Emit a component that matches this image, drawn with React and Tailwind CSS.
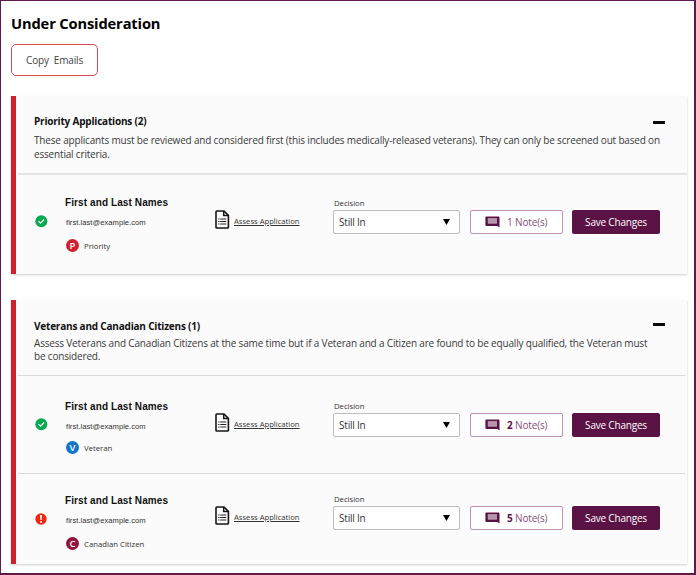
import React from "react";

function StatusIcon({ status }) {
  if (status === "ok") {
    return (
      <svg className="mt-[19px] block h-[13px] w-[13px]" viewBox="0 0 13 13">
        <circle cx="6.3" cy="6.2" r="6" fill="#0aa850" />
        <path d="M3.5 6.2 L5.5 8.2 L9.1 4.5" fill="none" stroke="#fff" strokeWidth="1.1" />
      </svg>
    );
  }
  return (
    <svg className="mt-[21px] block h-[12px] w-[12px]" viewBox="0 0 12 12">
      <circle cx="6" cy="6" r="5.7" fill="#f3260f" />
      <path d="M5 2.1 h2 l-0.4 4.9 h-1.2 z" fill="#fff" />
      <circle cx="6" cy="8.9" r="1" fill="#fff" />
    </svg>
  );
}

function DocumentIcon() {
  return (
    <svg className="block h-[19px] w-[15px] shrink-0" viewBox="0 0 15 19">
      <path d="M1.8 1 H9 L13.4 5.4 V17.2 Q13.4 18 12.6 18 H1.8 Q1 18 1 17.2 V1.8 Q1 1 1.8 1 Z" fill="#fff" stroke="#161616" strokeWidth="1.6" />
      <path d="M8.7 1.2 V5.5 H13" fill="none" stroke="#161616" strokeWidth="1.5" />
      <path d="M3.2 9 h1.3 M5.2 9 h6.1 M3.2 11.5 h1.3 M5.2 11.5 h6.1 M3.2 14 h1.3 M5.2 14 h6.1" stroke="#222" strokeWidth="1.2" />
    </svg>
  );
}

function CommentIcon() {
  return (
    <svg className="block h-[12px] w-[15px] shrink-0" viewBox="0 0 15 12">
      <path d="M1.4 0.4 H13.4 Q14.5 0.4 14.5 1.4 V11.6 L12.2 9.9 H1.4 Q0.4 9.9 0.4 8.9 V1.4 Q0.4 0.4 1.4 0.4 Z" fill="#5b1245" />
      <path d="M2.8 2.2 H12 V7.6 H2.8 Z" fill="#c4a8bc" />
      <path d="M2.8 4 H12 M2.8 5.8 H12" stroke="#96708a" strokeWidth="0.6" />
    </svg>
  );
}

function ApplicantRow({ applicant, className, infoClass, categoryClass }) {
  const { status, letter, badge, category, notes, boldCount } = applicant;
  return (
    <div className={`flex items-start pl-[19px] ${className}`}>
      <div className="w-[30px] shrink-0">
        <StatusIcon status={status} />
      </div>
      <div className={`w-[150px] shrink-0 font-['Liberation_Sans',Arial,sans-serif] ${infoClass}`}>
        <div className="text-[10px] leading-[12px] font-bold tracking-[0.1px] text-[#111]">First and Last Names</div>
        <div className="mt-[9px] pl-px text-[7.6px] leading-[10px] tracking-[0.03px] text-[#333]">first.last@example.com</div>
        <div className={`flex h-[13px] items-center gap-[5px] pl-px font-['Open_Sans',sans-serif] ${categoryClass}`}>
          <span className={`flex h-[13px] w-[13px] items-center justify-center rounded-full text-[9.5px] leading-none font-semibold text-white ${badge}`}>
            {letter}
          </span>
          <span className="text-[7.75px] leading-[12px] text-[#333]">{category}</span>
        </div>
      </div>
      <div className="mt-[14px] flex w-[118px] shrink-0 items-center gap-[4px]">
        <DocumentIcon />
        <a className="mt-[2px] text-[7.65px] leading-[12px] text-[#333] underline decoration-1 underline-offset-1">Assess Application</a>
      </div>
      <div className="mt-[2px] w-[127px] shrink-0">
        <div className="h-[12px] pl-[1px] text-[7.7px] leading-[11px] text-[#333]">Decision</div>
        <div className="flex h-[24px] items-center justify-between rounded-[2px] border border-[#bdbdbd] bg-white pr-[9px] pl-[5px] text-[10px] tracking-[-0.2px] text-[#333]">
          <span className="pt-px">Still In</span>
          <svg className="h-[6px] w-[7px]" viewBox="0 0 7 6">
            <path d="M0 0 H7 L3.5 6 Z" fill="#000" />
          </svg>
        </div>
      </div>
      <button className="mt-[14px] ml-[10px] flex h-[24px] w-[93px] shrink-0 items-center rounded-[2px] border border-[#bd93b1] bg-white pl-[14px] text-[10px] tracking-[-0.15px] whitespace-nowrap text-[#865078]">
        <CommentIcon />
        <span className="ml-[7px] pt-px">
          <span className={boldCount ? "font-bold text-[#5b1245]" : ""}>{notes}</span> Note(s)
        </span>
      </button>
      <button className="mt-[14px] ml-[9px] h-[24px] w-[88px] shrink-0 rounded-[2px] bg-[#5b1245] text-[10px] leading-[25px] font-medium tracking-[-0.2px] whitespace-nowrap text-white">
        Save Changes
      </button>
    </div>
  );
}

function Panel({ title, lines, className, headerClass, dashClass, textClass, dividerClass, children }) {
  return (
    <section className={`border-l-[5px] border-[#cf202f] bg-[#fbfbfb] shadow-[0_1px_2px_rgba(0,0,0,0.2)] ${className}`}>
      <header className={`pr-[22px] pl-[18px] ${headerClass}`}>
        <div className="flex h-[14px] items-start justify-between">
          <h2 className="text-[10px] leading-[14px] font-bold tracking-[-0.2px] text-[#111]">{title}</h2>
          <span className={`h-[3px] w-[12px] bg-[#0a0a0a] ${dashClass}`} />
        </div>
        <p className={`text-[10px] tracking-[-0.18px] whitespace-nowrap text-[#3a3a3a] ${textClass}`}>
          {lines[0]}
          <br />
          {lines[1]}
        </p>
      </header>
      <div className={`ml-[2px] ${dividerClass}`} />
      {children}
    </section>
  );
}

const priority = { status: "ok", letter: "P", badge: "bg-[#cf202f]", category: "Priority", notes: 1, boldCount: false };
const veteran = { status: "ok", letter: "V", badge: "bg-[#0f75c9]", category: "Veteran", notes: 2, boldCount: true };
const citizen = { status: "alert", letter: "C", badge: "bg-[#92133f]", category: "Canadian Citizen", notes: 5, boldCount: true };

export default function App() {
  return (
    <main className="h-[575px] w-[696px] overflow-hidden bg-white font-['Open_Sans',sans-serif]">
      <div className="h-[575px] w-[696px] border border-r-2 border-b-2 border-[#5e1a4c] pr-[7px] pl-[10px]">
        <h1 className="pt-[12px] text-[14.7px] leading-[20px] font-bold tracking-[-0.15px] text-black">Under Consideration</h1>
        <button className="mt-[11px] block h-[32px] w-[87px] rounded-[5px] border border-[#dc4a58] text-[10px] tracking-[-0.15px] whitespace-pre text-[#444]">
          Copy  Emails
        </button>
        <Panel
          title="Priority Applications (2)"
          lines={[
            "These applicants must be reviewed and considered first (this includes medically-released veterans). They can only be screened out based on",
            "essential criteria.",
          ]}
          className="mt-[20px] h-[178px]"
          headerClass="h-[77px] pt-[18px]"
          dashClass="mt-[7px]"
          textClass="mt-[6px] leading-[13.5px]"
          dividerClass="h-[2px] bg-[#e4e4e4]"
        >
          <ApplicantRow applicant={priority} className="pt-[21px]" infoClass="mt-px" categoryClass="mt-[11px]" />
        </Panel>
        <Panel
          title="Veterans and Canadian Citizens (1)"
          lines={[
            "Assess Veterans and Canadian Citizens at the same time but if a Veteran and a Citizen are found to be equally qualified, the Veteran must",
            "be considered.",
          ]}
          className="mt-[26px] h-[264px]"
          headerClass="h-[75px] pt-[19px]"
          dashClass="mt-[4px]"
          textClass="mt-[4px] leading-[13px]"
          dividerClass="mr-[2px] h-px bg-[#d9d9d9]"
        >
          <ApplicantRow applicant={veteran} className="h-[97px] pt-[23px]" infoClass="mt-[2px]" categoryClass="mt-[9px]" />
          <div className="mr-[2px] ml-[2px] h-px bg-[#d9d9d9]" />
          <ApplicantRow applicant={citizen} className="pt-[18px]" infoClass="mt-[3px]" categoryClass="mt-[11px]" />
        </Panel>
      </div>
    </main>
  );
}
